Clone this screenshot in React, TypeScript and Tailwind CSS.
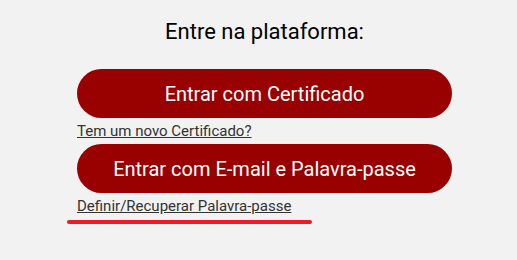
import React from 'react';

const App: React.FC = () => {
  return (
    <div
      className="min-h-screen w-full bg-[#f2f2f2] flex justify-center pl-[12px]"
      style={{ fontFamily: 'Roboto, "Liberation Sans", sans-serif' }}
    >
      <div className="w-[375px] flex flex-col pt-[15px]">
        <h1 className="text-center text-[22px] leading-[33px] text-black font-normal">
          Entre na plataforma:
        </h1>

        <button className="mt-[21px] h-[49px] w-full rounded-full bg-[#990000] text-white text-[20px] leading-none">
          Entrar com Certificado
        </button>
        <div className="mt-[3px] text-[15px] leading-[20px]">
          <a href="#" className="text-[#333] underline">
            Tem um novo Certificado?
          </a>
        </div>

        <button className="mt-[3px] h-[49px] w-full rounded-full bg-[#990000] text-white text-[20px] leading-none">
          Entrar com E-mail e Palavra-passe
        </button>
        <div className="mt-[3px] text-[15px] leading-[20px]">
          <a href="#" className="text-[#333] underline">
            Definir/Recuperar Palavra-passe
          </a>
        </div>

        {/* traço vermelho sob o link */}
        <div className="mt-[4px] -ml-[10px] w-[245px] h-[4px] rounded-full bg-[#ec1c24]" />
      </div>
    </div>
  );
};

export default App;
